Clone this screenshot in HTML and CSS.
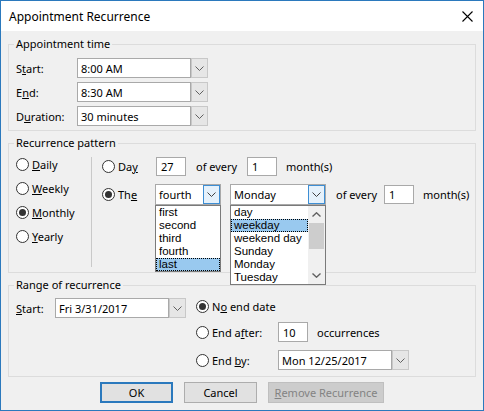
FILE: index.html
```html
<!DOCTYPE html>
<html lang="en">
<head>
<meta charset="UTF-8">
<title>Appointment Recurrence</title>
<link rel="stylesheet" href="styles.css">
</head>
<body>
<div class="dialog">
    <div class="titlebar">
        <span class="title">Appointment Recurrence</span>
        <svg class="close" width="11" height="11" viewBox="0 0 11 11"><path d="M0.5 0.5L10.5 10.5M10.5 0.5L0.5 10.5" stroke="#000" stroke-width="1.1"/></svg>
    </div>
    <div class="content">
        <!-- appointment time -->
        <fieldset class="group">
            <legend>Appointment time</legend>
            <div class="time-rows">
                <div class="row">
                    <span class="lbl-time">S<u>t</u>art:</span>
                    <span class="field w114">8:00 AM</span>
                    <span class="drop"><svg width="9" height="5" viewBox="0 0 9 5"><path d="M0.5 0.5L4.5 4.5L8.5 0.5" fill="none" stroke="#606060"/></svg></span>
                </div>
                <div class="row">
                    <span class="lbl-time">E<u>n</u>d:</span>
                    <span class="field w114">8:30 AM</span>
                    <span class="drop"><svg width="9" height="5" viewBox="0 0 9 5"><path d="M0.5 0.5L4.5 4.5L8.5 0.5" fill="none" stroke="#606060"/></svg></span>
                </div>
                <div class="row">
                    <span class="lbl-time">D<u>u</u>ration:</span>
                    <span class="field w114">30 minutes</span>
                    <span class="drop"><svg width="9" height="5" viewBox="0 0 9 5"><path d="M0.5 0.5L4.5 4.5L8.5 0.5" fill="none" stroke="#606060"/></svg></span>
                </div>
            </div>
        </fieldset>

        <!-- recurrence pattern -->
        <fieldset class="group">
            <legend>Recurrence pattern</legend>
            <div class="pattern">
                <div class="freq">
                    <div class="freq-row"><span class="radio"></span><span><u>D</u>aily</span></div>
                    <div class="freq-row"><span class="radio"></span><span><u>W</u>eekly</span></div>
                    <div class="freq-row"><span class="radio checked"></span><span><u>M</u>onthly</span></div>
                    <div class="freq-row"><span class="radio"></span><span><u>Y</u>early</span></div>
                </div>
                <div class="sep"></div>
                <div class="monthly">
                    <div class="row day-row">
                        <span class="opt w54"><span class="radio"></span><span>Da<u>y</u></span></span>
                        <span class="num">27</span>
                        <span class="of w51">of every</span>
                        <span class="num">1</span>
                        <span class="unit">month(s)</span>
                    </div>
                    <div class="row the-row">
                        <span class="opt w53"><span class="radio checked"></span><span>Th<u>e</u></span></span>
                        <div class="dd w66">
                            <span class="dd-text">fourth</span>
                            <span class="dd-btn"><svg width="9" height="5" viewBox="0 0 9 5"><path d="M0.5 0.5L4.5 4.5L8.5 0.5" fill="none" stroke="#404040"/></svg></span>
                            <div class="list">
                                <div class="item">first</div>
                                <div class="item">second</div>
                                <div class="item">third</div>
                                <div class="item">fourth</div>
                                <div class="item sel">last</div>
                            </div>
                        </div>
                        <div class="dd w96">
                            <span class="dd-text">Monday</span>
                            <span class="dd-btn"><svg width="9" height="5" viewBox="0 0 9 5"><path d="M0.5 0.5L4.5 4.5L8.5 0.5" fill="none" stroke="#404040"/></svg></span>
                            <div class="list has-scroll">
                                <div class="items">
                                    <div class="item">day</div>
                                    <div class="item sel">weekday</div>
                                    <div class="item">weekend day</div>
                                    <div class="item">Sunday</div>
                                    <div class="item">Monday</div>
                                    <div class="item">Tuesday</div>
                                </div>
                                <div class="scrollbar">
                                    <span class="sb-btn"><svg width="9" height="5" viewBox="0 0 9 5"><path d="M0.5 4.5L4.5 0.8L8.5 4.5" fill="none" stroke="#606060" stroke-width="1.4"/></svg></span>
                                    <span class="thumb"></span>
                                    <span class="track"></span>
                                    <span class="sb-btn"><svg width="9" height="5" viewBox="0 0 9 5"><path d="M0.5 0.5L4.5 4.2L8.5 0.5" fill="none" stroke="#606060" stroke-width="1.4"/></svg></span>
                                </div>
                            </div>
                        </div>
                        <span class="of w48">of every</span>
                        <span class="num">1</span>
                        <span class="unit">month(s)</span>
                    </div>
                </div>
            </div>
        </fieldset>

        <!-- range of recurrence -->
        <fieldset class="group">
            <legend>Range of recurrence</legend>
            <div class="range">
                <div class="row range-start">
                    <span class="lbl-start"><u>S</u>tart:</span>
                    <span class="field w114">Fri 3/31/2017</span>
                    <span class="drop"><svg width="9" height="5" viewBox="0 0 9 5"><path d="M0.5 0.5L4.5 4.5L8.5 0.5" fill="none" stroke="#606060"/></svg></span>
                </div>
                <div class="ends">
                    <div class="row">
                        <span class="opt"><span class="radio checked"></span><span>N<u>o</u> end date</span></span>
                    </div>
                    <div class="row end-after">
                        <span class="opt w82"><span class="radio"></span><span>End a<u>f</u>ter:</span></span>
                        <span class="num num20">10</span>
                        <span class="unit">occurrences</span>
                    </div>
                    <div class="row end-by">
                        <span class="opt w82"><span class="radio"></span><span>End <u>b</u>y:</span></span>
                        <span class="field w114">Mon 12/25/2017</span>
                        <span class="drop"><svg width="9" height="5" viewBox="0 0 9 5"><path d="M0.5 0.5L4.5 4.5L8.5 0.5" fill="none" stroke="#606060"/></svg></span>
                    </div>
                </div>
            </div>
        </fieldset>

        <div class="buttons">
            <span class="btn default">OK</span>
            <span class="btn">Cancel</span>
            <span class="btn disabled"><u>R</u>emove Recurrence</span>
        </div>
    </div>
</div>
</body>
</html>
```

FILE: styles.css
```css
* { box-sizing: border-box; }
body {
    margin: 0;
    background: #fff;
    font-family: "Noto Sans", "Open Sans", sans-serif;
    font-size: 11px;
    color: #000;
}
u { text-underline-offset: 1px; }

.dialog {
    width: 484px;
    height: 411px;
    border: 1px solid #2b79bd;
    background: #f0f0f0;
    display: flex;
    flex-direction: column;
}
.titlebar {
    height: 30px;
    flex: none;
    background: #fff;
    display: flex;
    align-items: center;
    justify-content: space-between;
    padding: 1px 10px 0 8px;
    font-size: 12px;
}
.content {
    flex: 1;
    padding: 5px 7px 0;
}

/* group boxes */
.group {
    margin: 0;
    padding: 0;
    min-width: 0;
    border: 1px solid #dcdcdc;
}
.group + .group { margin-top: 4px; }
legend {
    margin-left: 5px;
    padding: 0 2px;
    line-height: 16px;
}
.row {
    display: flex;
    align-items: center;
    height: 20px;
}

/* fields */
.field {
    height: 20px;
    border: 1px solid #a9a9a9;
    background: #fff;
    padding: 0 3px;
    display: flex;
    align-items: center;
    white-space: nowrap;
}
.w114 { width: 114px; }
.drop {
    width: 17px;
    height: 20px;
    border: 1px solid #c8c8c8;
    background: #e6e6e6;
    display: flex;
    align-items: center;
    justify-content: center;
}
.num {
    width: 30px;
    height: 19px;
    border: 1px solid #a9a9a9;
    background: #fff;
    padding-left: 4px;
    display: flex;
    align-items: center;
}
.num20 { height: 20px; }
.unit { margin-left: 9px; }
.of { margin-left: 10px; white-space: nowrap; }
.w51 { width: 51px; }
.w48 { width: 48px; }

/* radios */
.radio {
    width: 13px;
    height: 13px;
    border: 1px solid #333;
    border-radius: 50%;
    background: #fff;
    margin-right: 3px;
    flex: none;
    display: flex;
    align-items: center;
    justify-content: center;
}
.radio.checked::after {
    content: "";
    width: 7px;
    height: 7px;
    border-radius: 50%;
    background: #333;
}
.opt {
    display: flex;
    align-items: center;
    white-space: nowrap;
}
.w54 { width: 54px; }
.w53 { width: 53px; }
.w82 { width: 82px; }

/* appointment time */
.time-rows {
    padding: 6px 0 4px 7px;
    display: flex;
    flex-direction: column;
    gap: 4px;
}
.lbl-time { width: 61px; }

/* recurrence pattern */
.pattern {
    display: flex;
    padding: 1px 0 5px 0;
}
.freq {
    width: 82px;
    padding-left: 7px;
}
.freq-row {
    height: 24px;
    display: flex;
    align-items: center;
}
.sep {
    width: 1px;
    height: 110px;
    margin-top: 5px;
    background: #c9c9c9;
}
.monthly { padding-left: 10px; }
.day-row { margin-top: 5px; height: 19px; }
.the-row { margin-top: 8px; height: 21px; }

.dd {
    position: relative;
    height: 21px;
    border: 1px solid #a9a9a9;
    background: #fff;
    display: flex;
    align-items: center;
}
.dd + .dd { margin-left: 9px; }
.w66 { width: 66px; }
.w96 { width: 96px; }
.dd-text { padding-left: 3px; flex: 1; }
.dd-btn {
    width: 17px;
    height: 19px;
    border: 1px solid #3d8ed4;
    background: #e5f1fb;
    display: flex;
    align-items: center;
    justify-content: center;
}
.list {
    position: absolute;
    z-index: 2;
    top: calc(100% + 1px);
    left: -1px;
    right: -1px;
    background: #fff;
    border: 1px solid #7a7a7a;
    font-family: "Liberation Sans", Arial, sans-serif;
    font-size: 11.5px;
}
.item {
    height: 13px;
    line-height: 13px;
    padding-left: 3px;
    white-space: nowrap;
}
.item.sel {
    background: #99c9ef;
    outline: 1px dotted #000;
    outline-offset: -1px;
}
.has-scroll { display: flex; }
.items { flex: 1; }
.scrollbar {
    width: 17px;
    background: #f0f0f0;
    display: flex;
    flex-direction: column;
}
.sb-btn {
    height: 17px;
    display: flex;
    align-items: center;
    justify-content: center;
}
.thumb {
    height: 26px;
    margin: 0 1px;
    background: #cdcdcd;
}
.track { flex: 1; }

/* range of recurrence */
.range {
    display: flex;
    padding: 0 0 6px 7px;
}
.range-start { margin-top: 5px; }
.lbl-start { width: 39px; }
.ends {
    margin-left: 10px;
    margin-top: 3px;
}
.end-after { margin-top: 6px; }
.end-by { margin-top: 8px; }

/* dialog buttons */
.buttons {
    display: flex;
    gap: 11px;
    margin-top: 5px;
    padding-left: 92px;
}
.btn {
    width: 73px;
    height: 21px;
    border: 1px solid #adadad;
    background: #e1e1e1;
    display: flex;
    align-items: center;
    justify-content: center;
}
.btn.default { border: 2px solid #2b79bd; }
.btn.disabled {
    width: 116px;
    background: #cccccc;
    border-color: #bfbfbf;
    color: #838383;
}
```
